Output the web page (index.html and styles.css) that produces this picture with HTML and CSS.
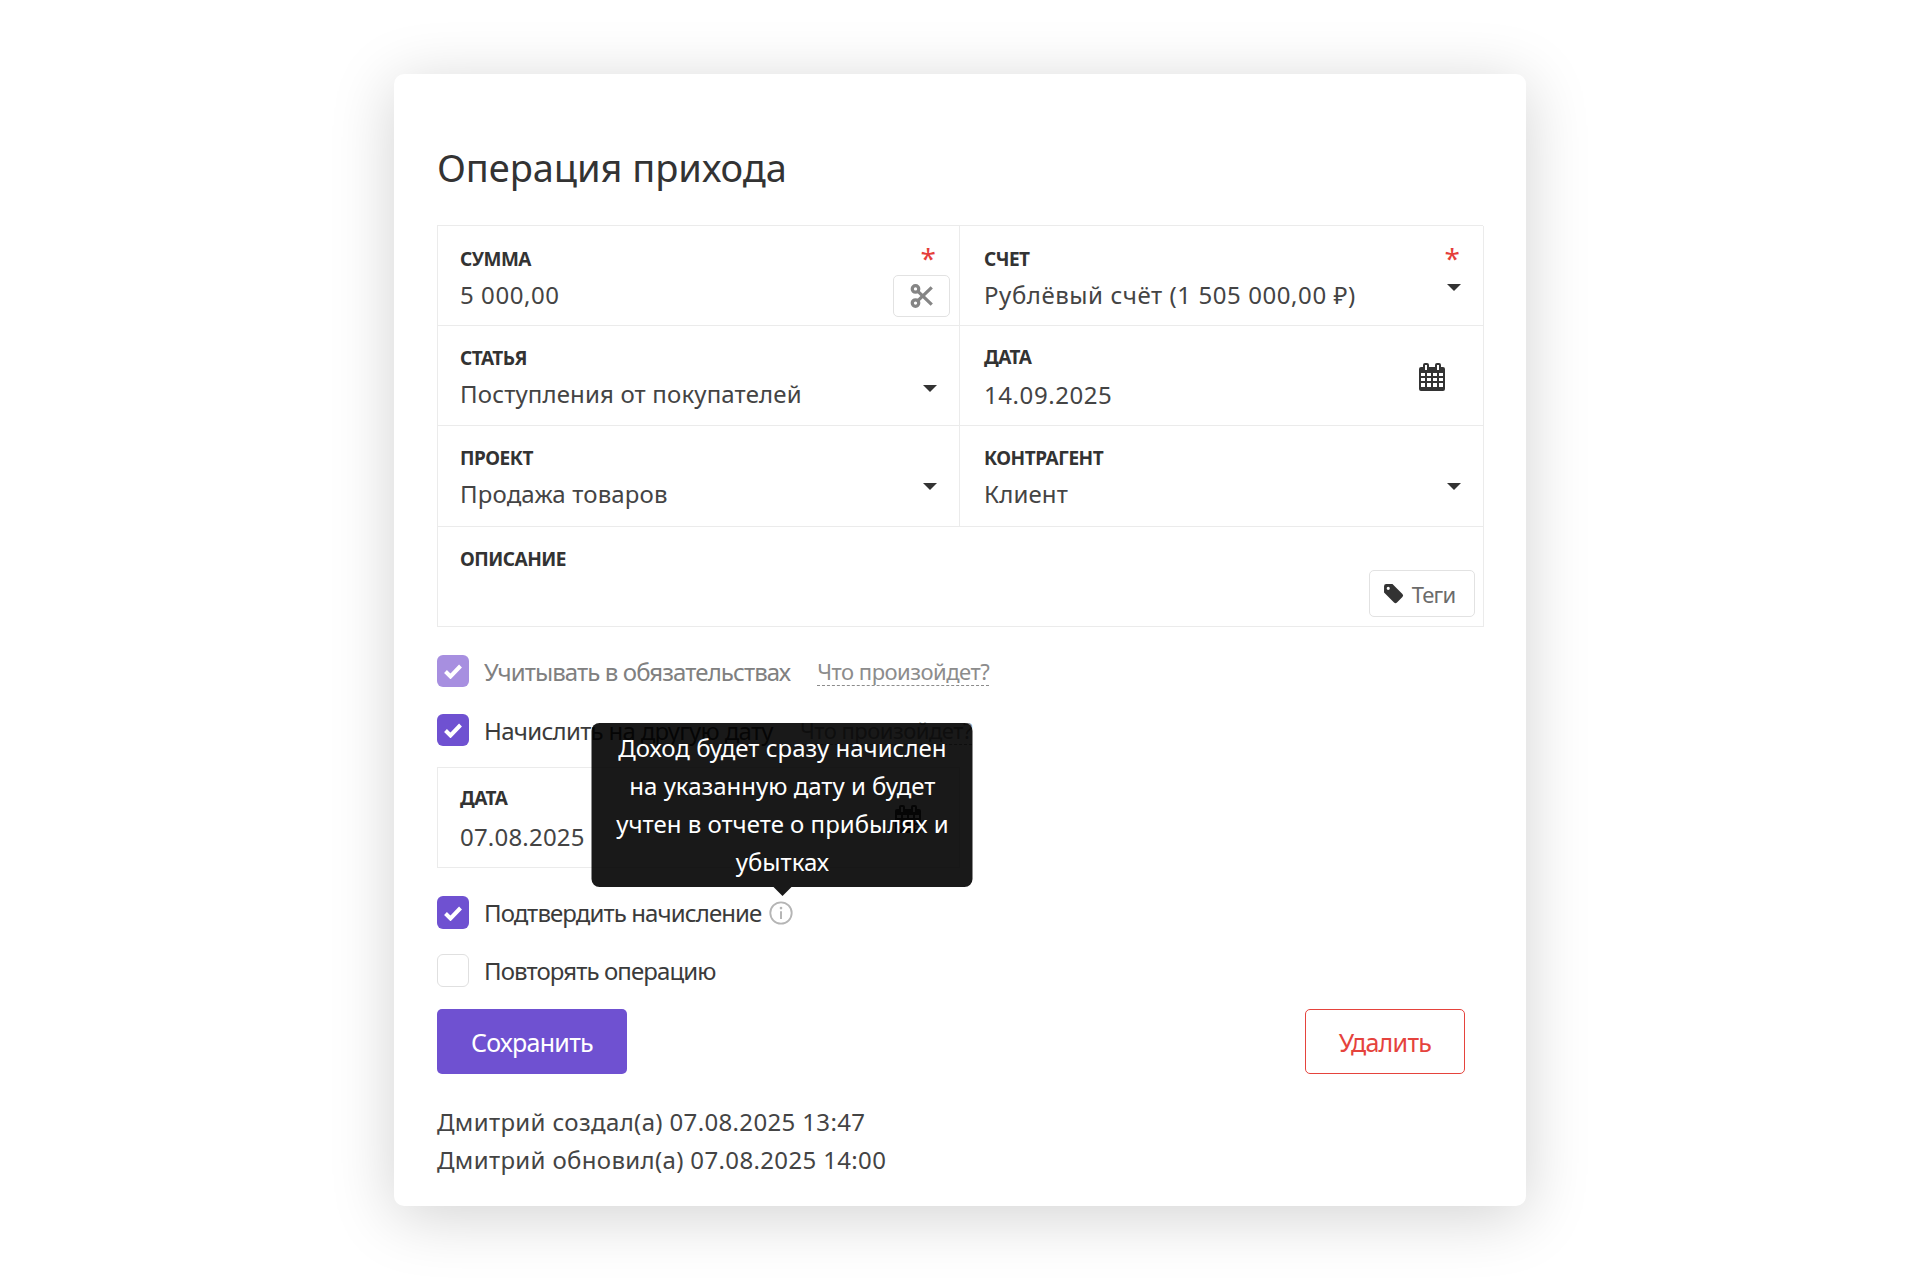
FILE: index.html
```html
<!DOCTYPE html>
<html lang="ru">
<head>
<meta charset="utf-8">
<title>Операция прихода</title>
<link rel="stylesheet" href="styles.css">
</head>
<body>
<main class="card">
  <h1 class="title">Операция прихода</h1>
  <div class="table">
    <div class="cell cell-first">
      <div class="label">Сумма</div><div class="value value-num">5 000,00</div>
      <span class="req">*</span>
      <span class="split"><svg width="26" height="26" viewBox="0 0 24 24"><g fill="none" stroke="#858585" stroke-width="3"><circle cx="6" cy="5.500" r="3"/><circle cx="6" cy="18.500" r="3"/><path d="M8 7.500 21 20M8 16.500 21 4"/></g></svg></span>
    </div>
    <div class="cell cell-first cell-right">
      <div class="label">Счет</div><div class="value value-num">Рублёвый счёт (1 505 000,00 ₽)</div>
      <span class="req">*</span><span class="caret caret-first"></span>
    </div>
    <div class="cell">
      <div class="label">Статья</div><div class="value">Поступления от покупателей</div>
      <span class="caret caret-second"></span>
    </div>
    <div class="cell cell-date cell-right">
      <div class="label">Дата</div><div class="value value-num">14.09.2025</div>
      <svg class="cal" width="26" height="28" viewBox="0 0 26 28"><use href="#calendar"/></svg>
    </div>
    <div class="cell">
      <div class="label">Проект</div><div class="value">Продажа товаров</div>
      <span class="caret caret-third"></span>
    </div>
    <div class="cell cell-right">
      <div class="label">Контрагент</div><div class="value">Клиент</div>
      <span class="caret caret-third"></span>
    </div>
    <div class="cell cell-wide">
      <div class="label">Описание</div>
      <span class="tags"><svg width="21" height="21" viewBox="0 0 20 20"><path fill="#333" d="M1 3a2 2 0 0 1 2-2h6l9.500 9.500a2 2 0 0 1 0 2.800l-5.200 5.200a2 2 0 0 1-2.800 0L1 9zM5 3.600a1.500 1.500 0 1 0 0 3 1.500 1.500 0 0 0 0-3z"/></svg>Теги</span>
    </div>
  </div>

  <div class="check-row check-first">
    <span class="check check-faded"><svg width="20" height="16" viewBox="0 0 20 16"><use href="#tick"/></svg></span>
    <span class="check-text muted">Учитывать в обязательствах</span>
    <span class="link">Что произойдет?</span>
  </div>
  <div class="check-row check-second">
    <span class="check"><svg width="20" height="16" viewBox="0 0 20 16"><use href="#tick"/></svg></span>
    <span class="check-text text-wide">Начислить на другую дату</span>
    <span class="link">Что произойдет?</span>
  </div>
  <div class="subtable">
    <div class="label">Дата</div><div class="value value-sub">07.08.2025</div>
    <svg class="cal cal-sub" width="26" height="28" viewBox="0 0 26 28"><use href="#calendar"/></svg>
  </div>
  <div class="check-row check-tall check-confirm">
    <span class="check"><svg width="20" height="16" viewBox="0 0 20 16"><use href="#tick"/></svg></span>
    <span class="check-text">Подтвердить начисление</span>
    <span class="info-wrap">
      <svg width="24" height="24" viewBox="0 0 22 22"><circle cx="11" cy="11" r="9.800" fill="none" stroke="#b5b5b5" stroke-width="1.700"/><circle cx="11" cy="6.500" r="1.200" fill="#b5b5b5"/><path d="M11 9.500v7" stroke="#b5b5b5" stroke-width="1.800"/></svg>
      <span class="tooltip">Доход будет сразу начислен<br>на указанную дату и будет<br>учтен в отчете о прибылях и<br>убытках</span>
    </span>
  </div>
  <div class="check-row check-tall check-repeat">
    <span class="check check-empty"></span>
    <span class="check-text">Повторять операцию</span>
  </div>
  <div class="actions">
    <button class="btn btn-save">Сохранить</button>
    <button class="btn btn-delete">Удалить</button>
  </div>
  <div class="meta">
    <div>Дмитрий создал(а) 07.08.2025 13:47</div>
    <div>Дмитрий обновил(а) 07.08.2025 14:00</div>
  </div>
</main>
<svg class="defs" width="0" height="0">
  <symbol id="tick" viewBox="0 0 20 16"><path d="M2.500 8.500 7.500 13.500 17.500 3" fill="none" stroke="#fff" stroke-width="4"/></symbol>
  <symbol id="calendar" viewBox="0 0 26 28"><path fill="#333" fill-rule="evenodd" d="M6 0h2a2 2 0 0 1 2 2v2h6V2a2 2 0 0 1 2-2h2a2 2 0 0 1 2 2v2h2a2 2 0 0 1 2 2v20a2 2 0 0 1-2 2H2a2 2 0 0 1-2-2V6a2 2 0 0 1 2-2h2V2a2 2 0 0 1 2-2zM6 2v5h2V2zM18 2v5h2V2zM2 10v3h4v-3zM8 10v3h4v-3zM14 10v3h4v-3zM20 10v3h4v-3zM2 15v3h4v-3zM8 15v3h4v-3zM14 15v3h4v-3zM20 15v3h4v-3zM2 20v4h4v-4zM8 20v4h4v-4zM14 20v4h4v-4zM20 20v4h4v-4z"/></symbol>
</svg>
</body>
</html>
```
FILE: styles.css
```css
* { box-sizing: border-box; }
html, body { margin: 0; background: #fff; }
body {
  height: 1280px;
  padding-top: 74px;
  font-family: "Noto Sans", "Open Sans", sans-serif;
  color: #3b3b3b;
}
.card {
  width: 1132px;
  height: 1132px;
  margin-left: 394px;
  padding: 69px 43px 0 43px;
  background: #fff;
  border-radius: 10px;
  box-shadow: 0 10px 64px rgba(0, 0, 0, .18);
}
.title {
  margin: 0 0 33px;
  height: 49px;
  font-size: 38px;
  line-height: 49px;
  font-weight: 400;
  letter-spacing: -.05px;
  color: #333;
}
.table {
  display: grid;
  grid-template-columns: 522px 524px;
  grid-template-rows: 100px 100px 101px 100px;
  width: 1046px;
  border-top: 1px solid #ebebeb;
  border-left: 1px solid #ebebeb;
}
.cell {
  position: relative;
  padding: 20px 0 0 22px;
  border-right: 1px solid #ebebeb;
  border-bottom: 1px solid #ebebeb;
}
.cell-right { padding-left: 24px; }
.cell-first { padding-top: 21px; }
.cell-date { padding-top: 19px; }
.cell-date .value { margin-top: 8px; }
.cell-wide { grid-column: 1 / 3; }
.label {
  font-size: 19px;
  line-height: 24px;
  font-weight: 700;
  text-transform: uppercase;
  letter-spacing: -.5px;
  color: #333;
}
.value {
  margin-top: 6px;
  font-size: 24px;
  line-height: 36px;
  letter-spacing: .15px;
  color: #444;
  white-space: nowrap;
}
.value-num { letter-spacing: .57px; }
.value-sub { letter-spacing: .2px; margin-top: 9px; }
.req {
  position: absolute;
  top: 16px;
  right: 23px;
  font-size: 28px;
  line-height: 32px;
  color: #e53e3a;
}
.split {
  position: absolute;
  top: 49px;
  right: 9px;
  width: 57px;
  height: 42px;
  display: flex;
  align-items: center;
  justify-content: center;
  border: 1px solid #e2e2e2;
  border-radius: 5px;
}
.caret {
  position: absolute;
  right: 22px;
  border-left: 7px solid transparent;
  border-right: 7px solid transparent;
  border-top: 7px solid #333;
}
.caret-first { top: 58px; }
.caret-second { top: 59px; }
.caret-third { top: 57px; }
.cal { position: absolute; top: 37px; right: 38px; }
.cal-sub { top: 37px; }
.tags {
  position: absolute;
  top: 43px;
  right: 8px;
  width: 106px;
  height: 47px;
  padding-right: 6px;
  display: flex;
  align-items: center;
  justify-content: center;
  gap: 8px;
  border: 1px solid #e2e2e2;
  border-radius: 5px;
  font-size: 22px;
  letter-spacing: -.8px;
  color: #6b6b6b;
}
.check-row {
  display: flex;
  align-items: center;
  height: 32px;
}
.check-tall { height: 33px; }
.check-first { margin-top: 28px; }
.check-second { margin-top: 27px; }
.check-confirm { margin-top: 28px; }
.check-repeat { margin-top: 25px; }
.check {
  flex: none;
  width: 32px;
  height: 100%;
  display: flex;
  align-items: center;
  justify-content: center;
  background: #6f51d1;
  border-radius: 6px;
}
.check-faded { background: #a78fe0; }
.check-empty { background: #fff; border: 1px solid #e0e0e0; }
.check-text {
  margin-left: 15px;
  font-size: 24px;
  letter-spacing: -.9px;
  white-space: nowrap;
}
.text-wide { letter-spacing: -.7px; }
.muted { color: #808080; }
.link {
  margin-left: 27px;
  font-size: 22px;
  letter-spacing: -.5px;
  color: #8c8c8c;
  border-bottom: 1px dashed #8c8c8c;
  line-height: 28px;
}
.subtable {
  position: relative;
  width: 523px;
  height: 101px;
  margin-top: 21px;
  padding: 18px 0 0 22px;
  border: 1px solid #ebebeb;
}
.info-wrap {
  position: relative;
  display: flex;
  margin-left: 8px;
}
.tooltip {
  position: absolute;
  left: 13px;
  bottom: calc(100% + 14px);
  transform: translateX(-50%);
  width: 381px;
  padding: 6px 0;
  background: rgba(0, 0, 0, .9);
  border-radius: 8px;
  font-size: 24px;
  line-height: 38px;
  letter-spacing: 0;
  color: #fff;
  text-align: center;
  white-space: nowrap;
}
.tooltip::after {
  content: "";
  position: absolute;
  left: 50%;
  bottom: -9px;
  margin-left: -9px;
  border-left: 9px solid transparent;
  border-right: 9px solid transparent;
  border-top: 9px solid rgba(0, 0, 0, .9);
}
.actions {
  display: flex;
  justify-content: space-between;
  width: 1028px;
  margin-top: 22px;
}
.btn {
  height: 65px;
  border-radius: 5px;
  font-family: inherit;
  font-size: 25px;
  letter-spacing: -.7px;
}
.btn-save {
  width: 190px;
  background: #6f51d1;
  border: 0;
  color: #fff;
}
.btn-delete {
  width: 160px;
  background: #fff;
  border: 1px solid #e5433d;
  color: #e5433d;
}
.meta {
  margin-top: 29px;
  font-size: 24px;
  line-height: 38px;
  letter-spacing: .35px;
  color: #444;
}
.defs { position: absolute; }
```
